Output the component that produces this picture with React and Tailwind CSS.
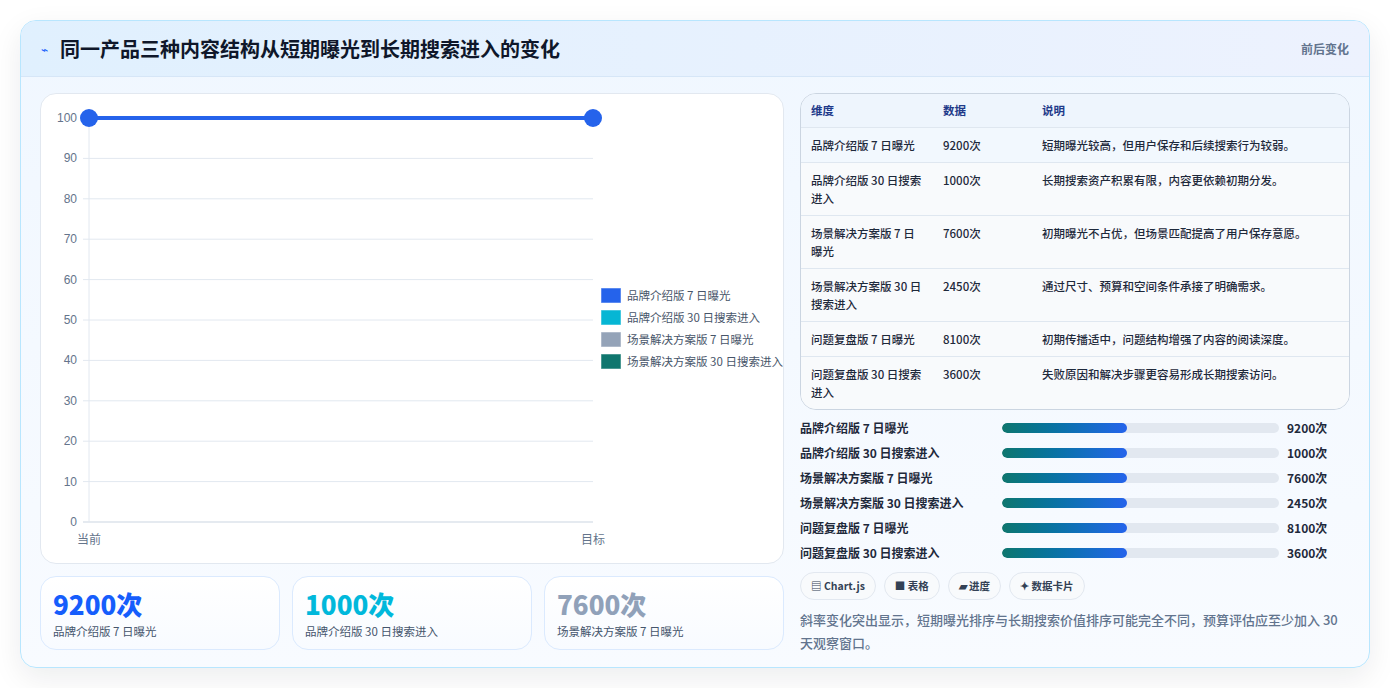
import React from 'react'

const rows = [
  ['品牌介绍版 7 日曝光', '9200次', '短期曝光较高，但用户保存和后续搜索行为较弱。'],
  ['品牌介绍版 30 日搜索进入', '1000次', '长期搜索资产积累有限，内容更依赖初期分发。'],
  ['场景解决方案版 7 日曝光', '7600次', '初期曝光不占优，但场景匹配提高了用户保存意愿。'],
  ['场景解决方案版 30 日搜索进入', '2450次', '通过尺寸、预算和空间条件承接了明确需求。'],
  ['问题复盘版 7 日曝光', '8100次', '初期传播适中，问题结构增强了内容的阅读深度。'],
  ['问题复盘版 30 日搜索进入', '3600次', '失败原因和解决步骤更容易形成长期搜索访问。'],
]

const legend = [
  ['品牌介绍版 7 日曝光', '#2563eb'],
  ['品牌介绍版 30 日搜索进入', '#06b6d4'],
  ['场景解决方案版 7 日曝光', '#94a3b8'],
  ['场景解决方案版 30 日搜索进入', '#0f766e'],
]

function Chart() {
  const ticks = [100, 90, 80, 70, 60, 50, 40, 30, 20, 10, 0]
  return (
    <svg width="744" height="470" className="block">
      {ticks.map((t, i) => {
        const y = 24 + i * 40.4
        return (
          <g key={t}>
            <line x1="42" x2="552" y1={y} y2={y} stroke={t === 0 ? '#cbd5e1' : '#e2e8f0'} />
            <text x="36" y={y + 4} textAnchor="end" fontSize="12" fill="#64748b" fontFamily="Liberation Sans, sans-serif">{t}</text>
          </g>
        )
      })}
      <line x1="48" x2="48" y1="24" y2="428" stroke="#e2e8f0" />
      <text x="48" y="450" textAnchor="middle" fontSize="12" fill="#64748b" fontFamily="Noto Sans CJK SC, sans-serif">当前</text>
      <text x="552" y="450" textAnchor="middle" fontSize="12" fill="#64748b" fontFamily="Noto Sans CJK SC, sans-serif">目标</text>
      <line x1="48" x2="552" y1="24" y2="24" stroke="#2563eb" strokeWidth="4" />
      <circle cx="48" cy="24" r="9" fill="#2563eb" />
      <circle cx="552" cy="24" r="9" fill="#2563eb" />
      {legend.map(([l, c], i) => (
        <g key={l}>
          <rect x="560" y={194 + i * 22} width="20" height="15" fill={c} stroke="#ffffff" strokeOpacity="0.5" />
          <text x="586" y={206 + i * 22} fontSize="11.5" fill="#475569" fontFamily="Noto Sans CJK SC, sans-serif">{l}</text>
        </g>
      ))}
    </svg>
  )
}

export default function App() {
  const font = { fontFamily: '"Noto Sans CJK SC", "Noto Sans", sans-serif' }
  return (
    <div className="w-[1390px] h-[688px] bg-white pt-5 px-5" style={font}>
      <div className="rounded-2xl border border-sky-200 bg-gradient-to-b from-[#f0f7ff] to-[#f8fbff] shadow-[0_10px_30px_rgba(15,23,42,0.08)] overflow-hidden h-[648px]">
        <div className="h-[56px] flex items-center justify-between px-5 bg-gradient-to-r from-[#e0f0fe] to-[#edf2fe] border-b border-[#d6e6f7]">
          <div className="flex items-center gap-3">
            <span className="text-[12px] text-blue-600">⌁</span>
            <span className="text-[20px] font-bold text-[#0f172a]">同一产品三种内容结构从短期曝光到长期搜索进入的变化</span>
          </div>
          <span className="text-[12px] font-bold text-slate-500">前后变化</span>
        </div>
        <div className="flex gap-4 px-[19px] pt-[16px]">
          <div className="w-[744px] flex flex-col gap-3">
            <div className="h-[471px] rounded-2xl bg-white border border-[#e2e8f0] overflow-hidden">
              <Chart />
            </div>
            <div className="grid grid-cols-3 gap-3">
              {[['9200次', '品牌介绍版 7 日曝光', 'text-blue-600'], ['1000次', '品牌介绍版 30 日搜索进入', 'text-cyan-500'], ['7600次', '场景解决方案版 7 日曝光', 'text-slate-400']].map(([v, l, c]) => (
                <div key={l} className="h-[74px] rounded-2xl border border-[#dbeafe] bg-gradient-to-b from-white to-[#f8fbff] px-3 pt-2.5">
                  <div className={`text-[26px] font-extrabold leading-[34px] ${c}`}>{v}</div>
                  <div className="text-[11.5px] text-slate-600 mt-0.5">{l}</div>
                </div>
              ))}
            </div>
          </div>
          <div className="w-[551px] flex flex-col">
            <div className="rounded-2xl border border-[#cbd5e1] overflow-hidden bg-[#f8fafc]">
              <table className="w-full text-[11.5px] border-collapse">
                <thead>
                  <tr className="bg-[#eef5fd] h-[33px] text-left text-[#1e3a8a] font-bold">
                    <th className="pl-2.5 w-[132px] font-bold">维度</th>
                    <th className="pl-2.5 w-[99px] font-bold">数据</th>
                    <th className="pl-2.5 font-bold">说明</th>
                  </tr>
                </thead>
                <tbody>
                  {rows.map((r, i) => (
                    <tr key={r[0]} className={`border-t border-[#dfe7f0] align-top ${i === 0 ? 'bg-[#f2f8fe]' : 'bg-[#f8fafc]'}`}>
                      <td className="px-2.5 py-[8px] leading-[18px] font-medium text-[#1e293b]">{r[0]}</td>
                      <td className="px-2.5 py-[8px] leading-[18px] font-medium text-[#1e293b]">{r[1]}</td>
                      <td className="px-2.5 py-[8px] leading-[18px] font-medium text-[#1e293b]">{r[2]}</td>
                    </tr>
                  ))}
                </tbody>
              </table>
            </div>
            <div className="flex flex-col mt-[6px]">
              {rows.map(r => (
                <div key={r[0]} className="flex items-center h-[25px] text-[12px] font-bold text-[#1e293b]">
                  <div className="w-[202px]">{r[0]}</div>
                  <div className="w-[277px] h-[10px] rounded-full bg-[#e2e8f0] overflow-hidden">
                    <div className="h-full w-[45%] rounded-full bg-gradient-to-r from-[#0f766e] to-[#2563eb]" />
                  </div>
                  <div className="pl-2">{r[1]}</div>
                </div>
              ))}
            </div>
            <div className="flex gap-2 mt-[6px]">
              {['▤ Chart.js', '■ 表格', '▰ 进度', '✦ 数据卡片'].map(c => (
                <span key={c} className="h-[28px] px-2.5 flex items-center rounded-full border border-[#e2e8f0] bg-[#f8fafc] text-[10.5px] font-bold text-[#334155]">{c}</span>
              ))}
            </div>
            <p className="mt-2 text-[13px] leading-[23px] font-medium text-slate-500">斜率变化突出显示，短期曝光排序与长期搜索价值排序可能完全不同，预算评估应至少加入 30 天观察窗口。</p>
          </div>
        </div>
      </div>
    </div>
  )
}
